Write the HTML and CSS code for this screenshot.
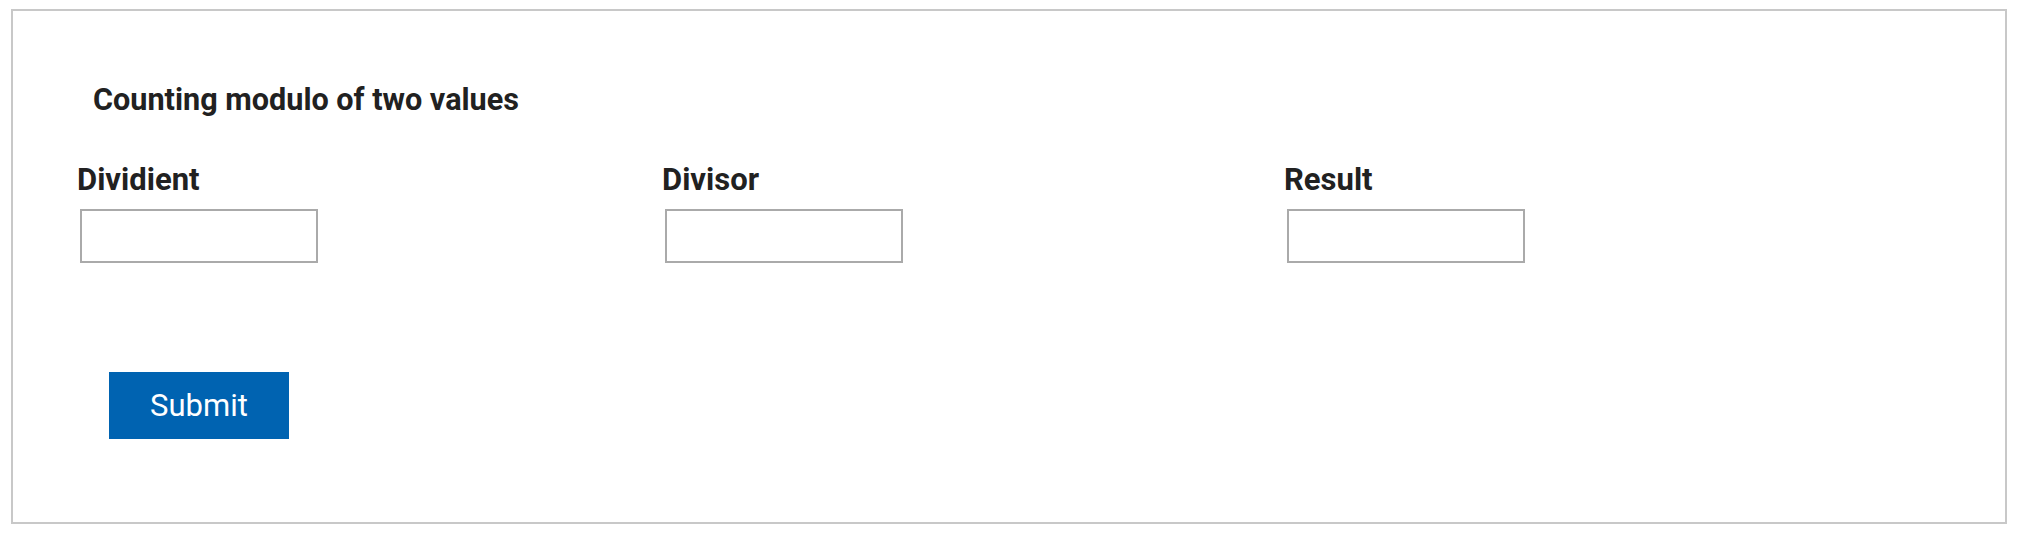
FILE: index.html
```html
<!DOCTYPE html>
<html lang="en">
<head>
<meta charset="utf-8">
<title>Counting modulo of two values</title>
<link rel="stylesheet" href="styles.css">
</head>
<body>
<div class="card">
  <h2 class="title">Counting modulo of two values</h2>
  <div class="fields">
    <div class="field">
      <label class="label" for="dividient">Dividient</label>
      <input class="input" id="dividient" type="text">
    </div>
    <div class="field">
      <label class="label" for="divisor">Divisor</label>
      <input class="input" id="divisor" type="text">
    </div>
    <div class="field">
      <label class="label" for="result">Result</label>
      <input class="input" id="result" type="text">
    </div>
  </div>
  <button class="submit" type="button">Submit</button>
</div>
</body>
</html>
```

FILE: styles.css
```css
html, body {
  margin: 0;
  padding: 0;
  background: #ffffff;
}

body {
  font-family: Roboto, "Liberation Sans", Arial, sans-serif;
  color: #212121;
}

.card {
  box-sizing: border-box;
  margin: 9px 13px 0 11px;
  height: 515px;
  border: 2px solid #c8c8c8;
  display: flex;
  flex-direction: column;
  align-items: flex-start;
}

.title {
  margin: 71px 0 0 80px;
  font-size: 30.6px;
  line-height: 36px;
  font-weight: 700;
}

.fields {
  display: grid;
  grid-template-columns: 585px 622px 1fr;
  align-self: stretch;
  margin: 44px 0 0 64px;
}

.field {
  display: flex;
  flex-direction: column;
  align-items: flex-start;
}

.label {
  font-size: 31px;
  line-height: 36px;
  font-weight: 700;
}

.input {
  box-sizing: border-box;
  width: 238px;
  height: 54px;
  margin: 11px 0 0 3px;
  border: 2px solid #aaaaaa;
  border-radius: 0;
  background: #ffffff;
  padding: 0 8px;
  font-family: inherit;
  font-size: 24px;
  outline: none;
}

.submit {
  box-sizing: border-box;
  width: 180px;
  height: 67px;
  margin: 109px 0 0 96px;
  border: 0;
  border-radius: 0;
  background: #0063b1;
  color: #ffffff;
  font-family: inherit;
  font-size: 31px;
  font-weight: 400;
  padding: 0;
  cursor: pointer;
}
```
